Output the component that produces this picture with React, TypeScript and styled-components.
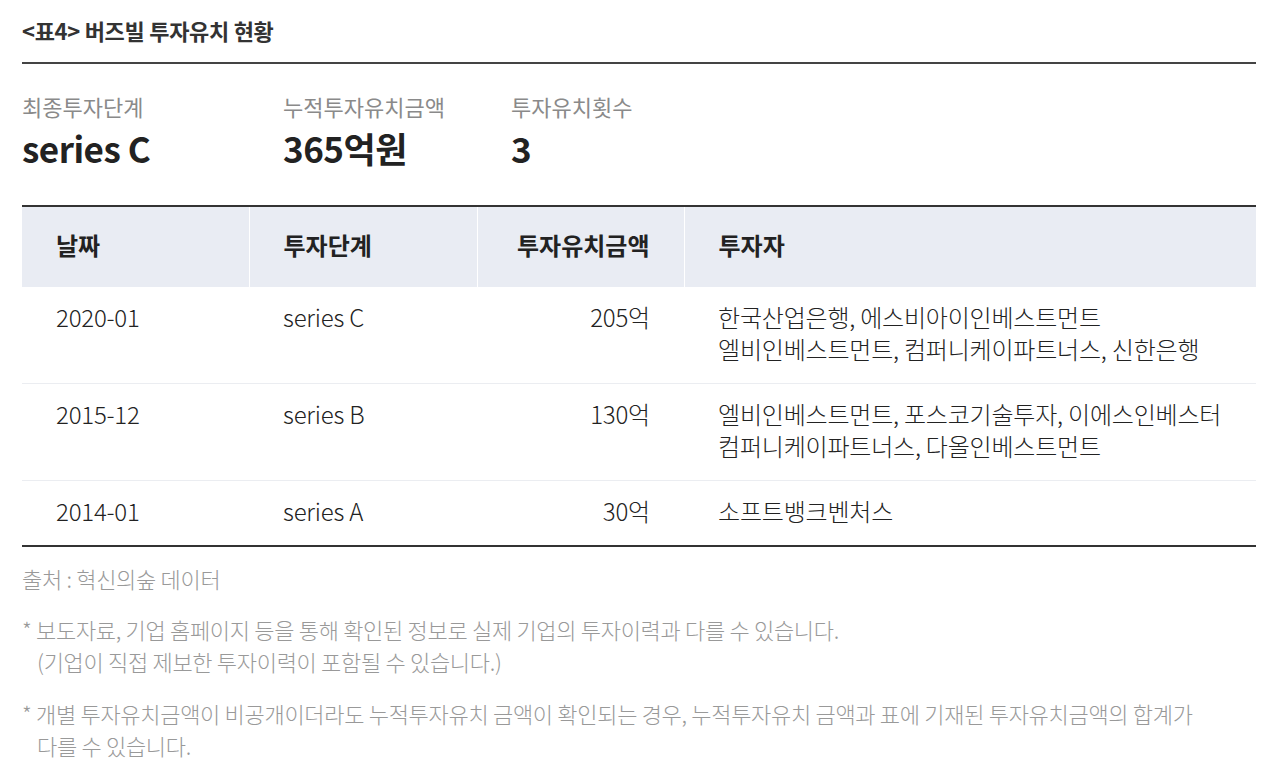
import React from "react";
import styled, { createGlobalStyle } from "styled-components";

const Global = createGlobalStyle`
  html, body { margin: 0; padding: 0; background: #fff; }
  body { font-family: "Noto Sans CJK KR", "Noto Sans", sans-serif; color: #222; }
  * { box-sizing: border-box; }
`;

const Page = styled.div`
  padding: 0 24px 0 22px;
  width: 1280px;
`;

const Title = styled.h2`
  margin: 0;
  height: 64px;
  padding-top: 15px;
  font-size: 22px;
  font-weight: 700;
  color: #333;
  letter-spacing: -0.3px;
  line-height: 30px;
  border-bottom: 2px solid #444;
`;

const Summary = styled.div`
  display: flex;
  padding-top: 29px;
  height: 141px;
`;

const SummaryItem = styled.div<{ $w: number }>`
  width: ${(p) => p.$w}px;
  display: flex;
  flex-direction: column;
  gap: 9px;
`;

const SummaryLabel = styled.div`
  font-size: 22px;
  line-height: 26px;
  color: #8a8a8a;
  font-weight: 400;
`;

const SummaryValue = styled.div`
  font-size: 35px;
  line-height: 40px;
  font-weight: 700;
  color: #222;
  letter-spacing: -0.5px;
`;

const Table = styled.table`
  width: 100%;
  border-collapse: collapse;
  border-top: 2px solid #333;
  border-bottom: 2px solid #333;
`;

const Th = styled.th<{ $w?: number; $right?: boolean }>`
  width: ${(p) => (p.$w ? `${p.$w}px` : "auto")};
  height: 81px;
  background: #e9ecf3;
  text-align: ${(p) => (p.$right ? "right" : "left")};
  padding: 0 34px 6px;
  font-size: 24px;
  font-weight: 700;
  color: #222;
  letter-spacing: 0;
  border-left: 1px solid #fff;
  &:first-child { border-left: none; }
`;

const Tr = styled.tr`
  border-top: 1px solid #ebedf1;
  &:first-child { border-top: none; }
`;

const Td = styled.td<{ $right?: boolean }>`
  vertical-align: top;
  padding: 14px 34px 18px;
  text-align: ${(p) => (p.$right ? "right" : "left")};
  font-size: 24px;
  line-height: 32px;
  font-weight: 300;
  color: #222;
  letter-spacing: -0.2px;
`;

const Source = styled.p`
  margin: 16px 0 0;
  font-size: 22px;
  line-height: 30px;
  color: #999;
  font-weight: 300;
  letter-spacing: -0.3px;
`;

const Note = styled.p`
  margin: 20px 0 0;
  padding-left: 15px;
  text-indent: -15px;
  font-size: 22px;
  line-height: 32px;
  color: #999;
  font-weight: 300;
  letter-spacing: -0.3px;
`;

const rows = [
  { date: "2020-01", stage: "series C", amount: "205억", investors: ["한국산업은행, 에스비아이인베스트먼트", "엘비인베스트먼트, 컴퍼니케이파트너스, 신한은행"] },
  { date: "2015-12", stage: "series B", amount: "130억", investors: ["엘비인베스트먼트, 포스코기술투자, 이에스인베스터", "컴퍼니케이파트너스, 다올인베스트먼트"] },
  { date: "2014-01", stage: "series A", amount: "30억", investors: ["소프트뱅크벤처스"] },
];

export default function App() {
  return (
    <Page>
      <Global />
      <Title>&lt;표4&gt; 버즈빌 투자유치 현황</Title>
      <Summary>
        <SummaryItem $w={261}>
          <SummaryLabel>최종투자단계</SummaryLabel>
          <SummaryValue>series C</SummaryValue>
        </SummaryItem>
        <SummaryItem $w={228}>
          <SummaryLabel>누적투자유치금액</SummaryLabel>
          <SummaryValue>365억원</SummaryValue>
        </SummaryItem>
        <SummaryItem $w={200}>
          <SummaryLabel>투자유치횟수</SummaryLabel>
          <SummaryValue>3</SummaryValue>
        </SummaryItem>
      </Summary>
      <Table>
        <thead>
          <tr>
            <Th $w={227}>날짜</Th>
            <Th $w={228}>투자단계</Th>
            <Th $w={207} $right>투자유치금액</Th>
            <Th>투자자</Th>
          </tr>
        </thead>
        <tbody>
          {rows.map((r) => (
            <Tr key={r.date}>
              <Td>{r.date}</Td>
              <Td>{r.stage}</Td>
              <Td $right>{r.amount}</Td>
              <Td>
                {r.investors.map((l, i) => (
                  <div key={i}>{l}</div>
                ))}
              </Td>
            </Tr>
          ))}
        </tbody>
      </Table>
      <Source>출처 : 혁신의숲 데이터</Source>
      <Note>
        * 보도자료, 기업 홈페이지 등을 통해 확인된 정보로 실제 기업의 투자이력과 다를 수 있습니다.
        <br />(기업이 직접 제보한 투자이력이 포함될 수 있습니다.)
      </Note>
      <Note>
        * 개별 투자유치금액이 비공개이더라도 누적투자유치 금액이 확인되는 경우, 누적투자유치 금액과 표에 기재된 투자유치금액의 합계가
        <br />다를 수 있습니다.
      </Note>
    </Page>
  );
}
